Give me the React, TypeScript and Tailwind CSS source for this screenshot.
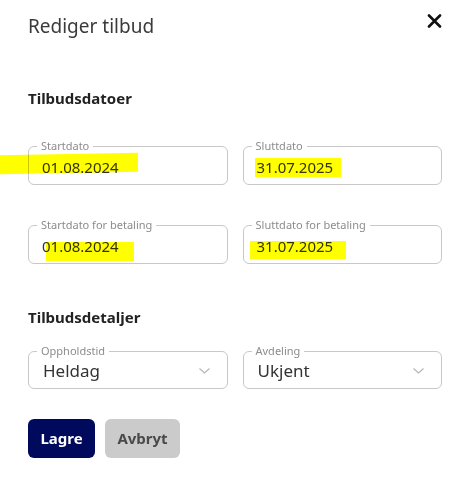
import React from "react";

const font = { fontFamily: '"Noto Sans", "Open Sans", sans-serif' };

function DateField({ label, value }: { label: string; value: string }) {
  return (
    <fieldset className="border border-[#c8c8c8] rounded-[6px] pl-[13px] pr-3 pb-[7px] pt-0 min-w-0">
      <legend className="-ml-[5px] px-[4px] text-[11px] leading-[14px] text-[#8c8c8c]">{label}</legend>
      <div className="mt-[4px] text-[15px] leading-[20px] text-[#333]">{value}</div>
    </fieldset>
  );
}

function SelectField({ label, value }: { label: string; value: string }) {
  return (
    <fieldset className="border border-[#c8c8c8] rounded-[6px] pl-[14px] pr-[17px] pb-[6px] pt-0 min-w-0">
      <legend className="-ml-[6px] px-[4px] text-[11px] leading-[14px] text-[#8c8c8c]">{label}</legend>
      <div className="flex items-center justify-between mt-[2px]">
        <span className="text-[17px] leading-[22px] text-[#333]">{value}</span>
        <svg width="11" height="6" viewBox="0 0 11 6" fill="none">
          <path d="M0.5 0.5L5.5 5L10.5 0.5" stroke="#b5b5b5" strokeWidth="1.1" />
        </svg>
      </div>
    </fieldset>
  );
}

export default function App() {
  return (
    <div className="relative w-[461px] h-[479px] bg-white overflow-hidden" style={font}>
      <div className="pl-[28px] pr-[19px]">
        {/* Header */}
        <div className="flex items-start justify-between pt-[13px]">
          <h1 className="text-[19px] leading-[26px] text-[#3a3a3a] font-normal">Rediger tilbud</h1>
          <svg className="mt-[1px]" width="15" height="14" viewBox="0 0 15 14">
            <path d="M2 1.5L13 12.5M13 1.5L2 12.5" stroke="#111" strokeWidth="2.6" strokeLinecap="round" />
          </svg>
        </div>

        <h2 className="mt-[49px] text-[15px] leading-[20px] font-bold text-[#222]">Tilbudsdatoer</h2>

        <div className="mt-[31px] grid grid-cols-2 gap-x-[15px] gap-y-[33px]">
          <DateField label="Startdato" value="01.08.2024" />
          <DateField label="Sluttdato" value="31.07.2025" />
          <DateField label="Startdato for betaling" value="01.08.2024" />
          <DateField label="Sluttdato for betaling" value="31.07.2025" />
        </div>

        <h2 className="mt-[43px] text-[15px] leading-[20px] font-bold text-[#222]">Tilbudsdetaljer</h2>

        <div className="mt-[17px] grid grid-cols-2 gap-x-[15px]">
          <SelectField label="Oppholdstid" value="Heldag" />
          <SelectField label="Avdeling" value="Ukjent" />
        </div>

        <div className="mt-[30px] flex gap-[10px]">
          <button className="h-[39px] w-[67px] rounded-[6px] bg-[#000a5c] text-white text-[15px] font-bold">Lagre</button>
          <button className="h-[39px] w-[75px] rounded-[6px] bg-[#cbcbcb] text-[#4a4a4a] text-[15px] font-bold">Avbryt</button>
        </div>
      </div>

      {/* marker highlights drawn over the screenshot */}
      <div className="absolute left-0 top-[154px] w-[138px] h-[19px] bg-[#ffff00] mix-blend-multiply -skew-y-1" />
      <div className="absolute left-[255px] top-[158px] w-[86px] h-[19px] bg-[#ffff00] mix-blend-multiply" />
      <div className="absolute left-[46px] top-[242px] w-[88px] h-[19px] bg-[#ffff00] mix-blend-multiply" />
      <div className="absolute left-[250px] top-[241px] w-[96px] h-[18px] bg-[#ffff00] mix-blend-multiply" />
    </div>
  );
}
